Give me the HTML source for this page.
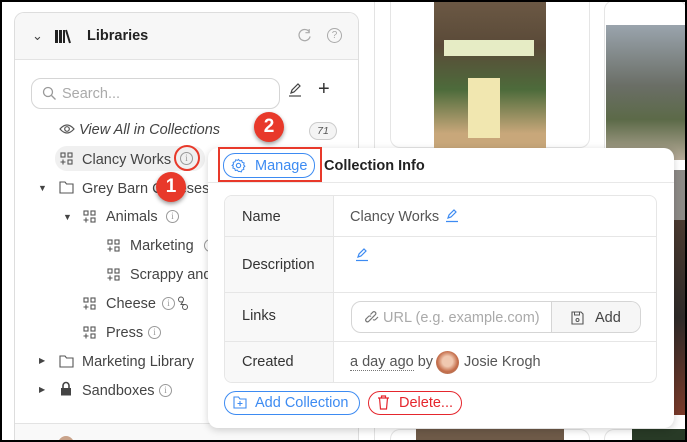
<!DOCTYPE html>
<html><head><meta charset="utf-8"><style>
*{box-sizing:border-box;margin:0;padding:0}
html,body{width:687px;height:442px;overflow:hidden}
body{background:#fff;font-family:"Liberation Sans",sans-serif;position:relative;color:#333}
.a{position:absolute}
.t{font-size:14.5px;color:#444;white-space:nowrap;margin-top:1px}
.info{display:inline-block;width:13px;height:13px;border:1px solid #999;border-radius:50%;font-size:9px;line-height:11px;text-align:center;color:#999;font-family:"Liberation Serif",serif}
.coll{position:absolute;width:13px;height:13px}
.badge{position:absolute;width:30px;height:30px;border-radius:50%;background:#e8392a;color:#fff;font-weight:bold;font-size:19px;text-align:center;line-height:30px;box-shadow:0 2px 4px rgba(0,0,0,.4)}
</style></head><body>
<div class="a" style="left:0;top:0;width:687px;height:442px;border:2px solid #000;z-index:50;pointer-events:none"></div>

<div class="a" style="left:374px;top:0;width:1px;height:442px;background:#e3e3e3"></div>
<div class="a" style="left:390px;top:0;width:200px;height:148px;border:1px solid #e5e5e5;border-top:none;border-radius:0 0 10px 10px"></div>
<div class="a" style="left:434px;top:2px;width:112px;height:146px;background:linear-gradient(#6b5844,#5a4a38 30%,#4d6b3b 60%,#c8a77a 90%)"></div>
<div class="a" style="left:444px;top:40px;width:90px;height:16px;background:#e6ecc5"></div>
<div class="a" style="left:468px;top:78px;width:32px;height:60px;background:#f1e7b0"></div>
<div class="a" style="left:604px;top:0;width:83px;height:160px;border:1px solid #e5e5e5;border-radius:10px"></div>
<div class="a" style="left:606px;top:25px;width:81px;height:135px;background:linear-gradient(#9aa4ad,#6a6e66 45%,#5c6a48 70%,#b6aa98)"></div>
<div class="a" style="left:606px;top:170px;width:81px;height:50px;background:#8d8a86"></div>
<div class="a" style="left:606px;top:220px;width:81px;height:195px;background:linear-gradient(#4b3a30,#2e2a28 50%,#7a3a2a)"></div>
<div class="a" style="left:390px;top:429px;width:200px;height:13px;border:1px solid #e5e5e5;border-bottom:none;border-radius:10px 10px 0 0"></div>
<div class="a" style="left:416px;top:429px;width:148px;height:13px;background:#6e5a48"></div>
<div class="a" style="left:604px;top:429px;width:83px;height:13px;border:1px solid #e5e5e5;border-bottom:none;border-radius:10px 10px 0 0"></div>
<div class="a" style="left:632px;top:429px;width:55px;height:13px;background:#283a26"></div>

<div class="a" style="left:14px;top:12px;width:345px;height:430px;border:1px solid #ddd;border-bottom:none;border-radius:10px 10px 0 0;background:#fff"></div>
<div class="a" style="left:15px;top:13px;width:343px;height:47px;background:#f7f7f7;border-bottom:1px solid #e3e3e3;border-radius:9px 9px 0 0"></div>
<div class="a t" style="left:32px;top:27px;font-size:13px">&#8964;</div>
<svg class="a" style="left:54px;top:28px" width="18" height="16" viewBox="0 0 18 16"><rect x="1" y="2" width="3" height="13" fill="#222"/><rect x="5" y="2" width="3" height="13" fill="#222"/><rect x="9" y="2" width="2" height="13" fill="#222"/><path d="M12 2l4 13" stroke="#222" stroke-width="2"/></svg>
<div class="a" style="left:87px;top:28px;font-size:14.5px;font-weight:bold;color:#222">Libraries</div>
<svg class="a" style="left:297px;top:28px" width="15" height="15" viewBox="0 0 16 16"><path d="M13 4A6 6 0 1 0 14 9" fill="none" stroke="#aaa" stroke-width="1.3"/><path d="M13 1v4h-4" fill="none" stroke="#aaa" stroke-width="1.3"/></svg>
<div class="a" style="left:327px;top:28px;width:15px;height:15px;border:1.3px solid #aaa;border-radius:50%;font-size:10px;line-height:13px;text-align:center;color:#aaa">?</div>

<div class="a" style="left:31px;top:78px;width:249px;height:31px;border:1px solid #d5d5d5;border-radius:10px"></div>
<svg class="a" style="left:42px;top:86px" width="15" height="15" viewBox="0 0 15 15"><circle cx="6" cy="6" r="4.5" fill="none" stroke="#999" stroke-width="1.3"/><path d="M9.5 9.5l4 4" stroke="#999" stroke-width="1.3"/></svg>
<div class="a t" style="left:62px;top:85px;color:#aaa">Search...</div>
<svg class="a" style="left:287px;top:82px" width="16" height="16" viewBox="0 0 16 16"><path d="M4 11l1-3 6-6 2 2-6 6z" fill="none" stroke="#444" stroke-width="1.2"/><path d="M2 14h12" stroke="#444" stroke-width="1.2"/></svg>
<div class="a" style="left:318px;top:78px;font-size:20px;color:#333;font-weight:300">+</div>

<svg class="a" style="left:59px;top:123px" width="16" height="12" viewBox="0 0 16 12"><path d="M1 6Q8-2 15 6Q8 14 1 6z" fill="none" stroke="#555" stroke-width="1.2"/><circle cx="8" cy="6" r="2.3" fill="none" stroke="#555" stroke-width="1.2"/></svg>
<div class="a t" style="left:79px;top:121px;font-style:italic">View All in Collections</div>
<div class="a" style="left:309px;top:122px;width:28px;height:18px;border:1px solid #ccc;border-radius:9px;background:#f4f4f4;font-size:10.5px;font-style:italic;text-align:center;line-height:16px;color:#555">71</div>

<div class="a" style="left:55px;top:146px;width:150px;height:25px;background:#f0f0f0;border-radius:12px"></div>
<svg class="coll" style="left:60px;top:152px" viewBox="0 0 13 13"><g fill="none" stroke="#555" stroke-width="1.1"><rect x="1" y="1" width="4" height="4"/><rect x="8" y="1" width="4" height="4"/><rect x="8" y="8" width="4" height="4"/><path d="M3 7.5v5M0.5 10h5"/></g></svg>
<div class="a t" style="left:82px;top:151px">Clancy Works</div>
<div class="a info" style="left:180px;top:152px">i</div>
<div class="a" style="left:174px;top:145px;width:26px;height:26px;border:2.5px solid #e8392a;border-radius:50%"></div>

<div class="a" style="left:38px;top:183px;font-size:9px;color:#444">&#9660;</div>
<svg class="a" style="left:59px;top:181px" width="15" height="13" viewBox="0 0 15 13"><path d="M1 1h5l1.5 2H14v9H1z" fill="none" stroke="#555" stroke-width="1.1"/></svg>
<div class="a t" style="left:82px;top:180px">Grey Barn Cheeses</div>

<div class="a" style="left:63px;top:212px;font-size:9px;color:#444">&#9660;</div>
<svg class="coll" style="left:83px;top:210px" viewBox="0 0 13 13"><g fill="none" stroke="#555" stroke-width="1.1"><rect x="1" y="1" width="4" height="4"/><rect x="8" y="1" width="4" height="4"/><rect x="8" y="8" width="4" height="4"/><path d="M3 7.5v5M0.5 10h5"/></g></svg>
<div class="a t" style="left:106px;top:208px">Animals</div>
<div class="a info" style="left:166px;top:210px">i</div>

<svg class="coll" style="left:107px;top:239px" viewBox="0 0 13 13"><g fill="none" stroke="#555" stroke-width="1.1"><rect x="1" y="1" width="4" height="4"/><rect x="8" y="1" width="4" height="4"/><rect x="8" y="8" width="4" height="4"/><path d="M3 7.5v5M0.5 10h5"/></g></svg>
<div class="a t" style="left:130px;top:237px">Marketing</div>
<div class="a info" style="left:204px;top:239px">i</div>
<svg class="coll" style="left:107px;top:268px" viewBox="0 0 13 13"><g fill="none" stroke="#555" stroke-width="1.1"><rect x="1" y="1" width="4" height="4"/><rect x="8" y="1" width="4" height="4"/><rect x="8" y="8" width="4" height="4"/><path d="M3 7.5v5M0.5 10h5"/></g></svg>
<div class="a t" style="left:130px;top:266px">Scrappy and Co</div>

<svg class="coll" style="left:83px;top:297px" viewBox="0 0 13 13"><g fill="none" stroke="#555" stroke-width="1.1"><rect x="1" y="1" width="4" height="4"/><rect x="8" y="1" width="4" height="4"/><rect x="8" y="8" width="4" height="4"/><path d="M3 7.5v5M0.5 10h5"/></g></svg>
<div class="a t" style="left:106px;top:295px">Cheese</div>
<div class="a info" style="left:162px;top:297px">i</div>
<svg class="a" style="left:177px;top:296px" width="12" height="15" viewBox="0 0 12 15"><g fill="none" stroke="#555" stroke-width="1"><circle cx="4" cy="3.5" r="2.5"/><circle cx="8" cy="11" r="2.5"/><path d="M6 5.5l-2 3 4 0"/></g></svg>
<svg class="coll" style="left:83px;top:326px" viewBox="0 0 13 13"><g fill="none" stroke="#555" stroke-width="1.1"><rect x="1" y="1" width="4" height="4"/><rect x="8" y="1" width="4" height="4"/><rect x="8" y="8" width="4" height="4"/><path d="M3 7.5v5M0.5 10h5"/></g></svg>
<div class="a t" style="left:106px;top:324px">Press</div>
<div class="a info" style="left:148px;top:326px">i</div>

<div class="a" style="left:39px;top:356px;font-size:8px;color:#444">&#9654;</div>
<svg class="a" style="left:59px;top:355px" width="15" height="13" viewBox="0 0 15 13"><path d="M1 1h5l1.5 2H14v9H1z" fill="none" stroke="#555" stroke-width="1.1"/></svg>
<div class="a t" style="left:82px;top:353px">Marketing Library</div>
<div class="a" style="left:39px;top:385px;font-size:8px;color:#444">&#9654;</div>
<svg class="a" style="left:60px;top:381px" width="12" height="15" viewBox="0 0 12 15"><path d="M3 7V4.5a3 3 0 0 1 6 0V7" fill="none" stroke="#444" stroke-width="1.6"/><rect x="1" y="7" width="10" height="7.5" fill="#444"/></svg>
<div class="a t" style="left:82px;top:382px">Sandboxes</div>
<div class="a info" style="left:159px;top:384px">i</div>
<div class="a" style="left:15px;top:423px;width:343px;height:1px;background:#e3e3e3"></div>
<div class="a" style="left:15px;top:424px;width:343px;height:18px;background:#f9f9f9"></div>
<div class="a" style="left:58px;top:436px;width:16px;height:8px;border-radius:8px 8px 0 0;background:#c9a38a"></div>

<div class="a" style="left:208px;top:148px;width:466px;height:280px;background:#fff;border-radius:10px;box-shadow:0 2px 8px rgba(0,0,0,.18)"></div>
<div class="a" style="left:208px;top:182px;width:466px;height:1px;background:#e8e8e8"></div>
<div class="a" style="left:223px;top:153px;width:92px;height:25px;border:1px solid #3d8bf2;border-radius:12px"></div>
<svg class="a" style="left:231px;top:158px" width="15" height="15" viewBox="0 0 16 16"><circle cx="8" cy="8" r="2.3" fill="none" stroke="#3d8bf2" stroke-width="1.2"/><path d="M8 1.5l1.4 1.6 2-.5.6 2 2 .7-.5 2 1.3 1.5-1.5 1.4.4 2-2 .6-.7 2-2-.5L8 14.5l-1.4-1.6-2 .5-.6-2-2-.7.5-2L1.2 8l1.5-1.4-.4-2 2-.6.7-2 2 .5z" fill="none" stroke="#3d8bf2" stroke-width="1.1"/></svg>
<div class="a" style="left:255px;top:158px;font-size:14.5px;color:#3d8bf2">Manage</div>
<div class="a" style="left:218px;top:147px;width:104px;height:35px;border:2.5px solid #e8392a"></div>
<div class="a" style="left:324px;top:158px;font-size:14.5px;font-weight:bold;color:#222">Collection Info</div>

<div class="a" style="left:224px;top:195px;width:433px;height:188px;border:1px solid #e6e6e6;border-radius:8px;overflow:hidden">
 <div class="a" style="left:0;top:0;width:109px;height:188px;background:#f8f8f8;border-right:1px solid #e6e6e6"></div>
 <div class="a" style="left:0;top:40px;width:433px;height:1px;background:#e6e6e6"></div>
 <div class="a" style="left:0;top:96px;width:433px;height:1px;background:#e6e6e6"></div>
 <div class="a" style="left:0;top:145px;width:433px;height:1px;background:#e6e6e6"></div>
 <div class="a t" style="left:17px;top:12px;color:#333">Name</div>
 <div class="a t" style="left:17px;top:60px;color:#333">Description</div>
 <div class="a t" style="left:17px;top:111px;color:#333">Links</div>
 <div class="a t" style="left:17px;top:157px;color:#333">Created</div>
 <div class="a t" style="left:125px;top:12px;color:#555">Clancy Works</div>
 <svg class="a" style="left:220px;top:12px" width="14" height="15" viewBox="0 0 14 15"><path d="M3 10l1-3 5-5 2 2-5 5z" fill="none" stroke="#3d8bf2" stroke-width="1.2"/><path d="M1 13.5h12" stroke="#3d8bf2" stroke-width="1.2"/></svg>
 <svg class="a" style="left:130px;top:51px" width="14" height="15" viewBox="0 0 14 15"><path d="M3 10l1-3 5-5 2 2-5 5z" fill="none" stroke="#3d8bf2" stroke-width="1.2"/><path d="M1 13.5h12" stroke="#3d8bf2" stroke-width="1.2"/></svg>
 <div class="a" style="left:126px;top:105px;width:290px;height:32px;border:1px solid #d5d5d5;border-radius:10px;overflow:hidden">
  <div class="a" style="left:199px;top:0;width:91px;height:32px;background:#f6f6f6;border-left:1px solid #d5d5d5"></div>
  <svg class="a" style="left:13px;top:9px" width="14" height="14" viewBox="0 0 14 14"><g fill="none" stroke="#777" stroke-width="1.2"><path d="M6 8l-2.5 2.5a1.8 1.8 0 0 1-2.5-2.5L3.5 5.5a1.8 1.8 0 0 1 2.5 0"/><path d="M8 6l2.5-2.5a1.8 1.8 0 0 0-2.5-2.5L5.5 3.5M8 8.5a1.8 1.8 0 0 0 2.5 0L13 6"/><path d="M5 9l4-4"/></g></svg>
  <div class="a t" style="left:31px;top:7px;color:#aaa">URL (e.g. example.com)</div>
  <svg class="a" style="left:219px;top:9px" width="13" height="14" viewBox="0 0 13 14"><path d="M1 1h9l2 2v10H1z" fill="none" stroke="#555" stroke-width="1.1"/><rect x="3.5" y="1" width="5" height="3" fill="none" stroke="#555"/><circle cx="6.5" cy="9" r="1.5" fill="none" stroke="#555"/></svg>
  <div class="a t" style="left:243px;top:7px;color:#444">Add</div>
 </div>
 <div class="a t" style="left:125px;top:157px;color:#555"><span style="border-bottom:1px dotted #777">a day ago</span> by</div>
 <div class="a" style="left:211px;top:155px;width:23px;height:23px;border-radius:50%;background:radial-gradient(circle at 50% 45%,#f0c8b0 30%,#c46d4a 60%,#a8806a)"></div>
 <div class="a t" style="left:239px;top:157px;color:#555">Josie Krogh</div>
</div>

<div class="a" style="left:224px;top:391px;width:136px;height:24px;border:1px solid #3d8bf2;border-radius:12px"></div>
<svg class="a" style="left:233px;top:396px" width="14" height="13" viewBox="0 0 14 13"><path d="M1 1h4.5l1.5 2H13v9H1z" fill="none" stroke="#3d8bf2" stroke-width="1.1"/><path d="M7 5v5M4.5 7.5h5" stroke="#3d8bf2" stroke-width="1.1"/></svg>
<div class="a" style="left:255px;top:395px;font-size:14.5px;color:#3d8bf2">Add Collection</div>
<div class="a" style="left:368px;top:391px;width:94px;height:24px;border:1px solid #e5262d;border-radius:12px"></div>
<svg class="a" style="left:377px;top:395px" width="13" height="15" viewBox="0 0 13 15"><path d="M1 3h11M4.5 3V1h4v2M2.5 3l1 11h6l1-11" fill="none" stroke="#e5262d" stroke-width="1.2"/></svg>
<div class="a" style="left:399px;top:395px;font-size:14.5px;color:#e5262d">Delete...</div>

<div class="badge" style="left:156px;top:172px">1</div>
<div class="badge" style="left:254px;top:112px">2</div>
</body></html>
